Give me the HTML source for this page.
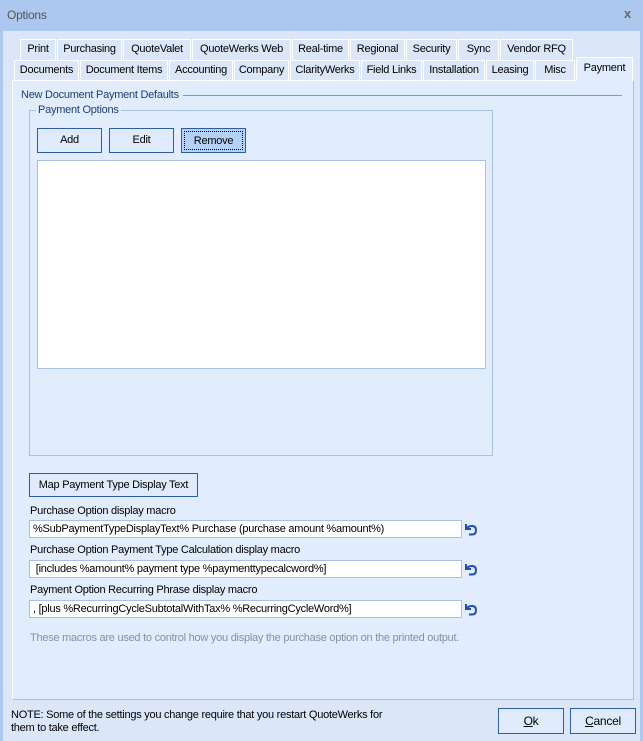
<!DOCTYPE html>
<html><head><style>
*{margin:0;padding:0;box-sizing:border-box}
body{width:643px;height:741px;background:#dbe7f8;font-family:"Liberation Sans",sans-serif;font-size:11px;letter-spacing:-0.25px;color:#000;position:relative;overflow:hidden}
.a{position:absolute;white-space:nowrap}
.tab{position:absolute;height:21px;border:1px solid #fff;border-bottom:none;background:#dbe7f8;text-align:center;line-height:19px;font-size:11px}
.btn{position:absolute;border:1px solid #2d5f9e;background:#dfeafa;text-align:center;line-height:22px}
.inp{position:absolute;background:#fff;border:1px solid #a9c1e0;height:18px;line-height:16px;padding-left:3px}
.ic{position:absolute;width:16px;height:16px}
</style></head><body>
<div class="a" style="left:0;top:0;width:643px;height:31px;background:#adc8ee"></div>
<div class="a" style="left:7px;top:8px;font-size:12px;color:#555">Options</div>
<div class="a" style="left:624px;top:6px;font-size:13px;font-weight:bold;color:#666">x</div>
<div class="a" style="left:0;top:31px;width:3px;height:710px;background:#adc8ee"></div>
<div class="a" style="left:640px;top:31px;width:3px;height:710px;background:#adc8ee"></div>

<div class="tab" style="left:20px;top:39px;width:36px">Print</div>
<div class="tab" style="left:57px;top:39px;width:65px">Purchasing</div>
<div class="tab" style="left:123px;top:39px;width:68px">QuoteValet</div>
<div class="tab" style="left:192px;top:39px;width:99px">QuoteWerks Web</div>
<div class="tab" style="left:292px;top:39px;width:57px">Real-time</div>
<div class="tab" style="left:350px;top:39px;width:55px">Regional</div>
<div class="tab" style="left:406px;top:39px;width:51px">Security</div>
<div class="tab" style="left:458px;top:39px;width:41px">Sync</div>
<div class="tab" style="left:500px;top:39px;width:73px">Vendor RFQ</div>

<div class="tab" style="left:14px;top:60px;width:65px">Documents</div>
<div class="tab" style="left:80px;top:60px;width:88px">Document Items</div>
<div class="tab" style="left:169px;top:60px;width:64px">Accounting</div>
<div class="tab" style="left:234px;top:60px;width:55px">Company</div>
<div class="tab" style="left:290px;top:60px;width:70px">ClarityWerks</div>
<div class="tab" style="left:361px;top:60px;width:61px">Field Links</div>
<div class="tab" style="left:423px;top:60px;width:62px">Installation</div>
<div class="tab" style="left:486px;top:60px;width:48px">Leasing</div>
<div class="tab" style="left:535px;top:60px;width:40px">Misc</div>

<div class="a" style="left:12px;top:80px;width:622px;height:620px;background:#e1ecfc;border:1px solid #fff;border-right-color:#a9c1e0;border-bottom-color:#a9c1e0"></div>
<div class="tab" style="left:576px;top:57px;width:57px;height:24px;background:#e1ecfc;line-height:21px">Payment</div>

<div class="a" style="left:21px;top:89px;color:#1d3f75">New Document Payment Defaults</div>
<div class="a" style="left:183px;top:95px;width:439px;height:1px;background:#7d9cc6"></div>
<div class="a" style="left:29px;top:110px;width:464px;height:346px;border:1px solid #a9c1e0"></div>
<div class="a" style="left:36px;top:104px;padding:0 2px;background:#e1ecfc;color:#1d3f75">Payment Options</div>
<div class="btn" style="left:37px;top:128px;width:65px;height:25px">Add</div>
<div class="btn" style="left:109px;top:128px;width:65px;height:25px">Edit</div>
<div class="btn" style="left:181px;top:128px;width:65px;height:25px;background:#b4d2f8;border-color:#2d5f9e"><div style="position:absolute;left:2px;top:2px;right:2px;bottom:2px;border:1px dotted #000;line-height:19px">Remove</div></div>
<div class="a" style="left:37px;top:160px;width:449px;height:209px;background:#fff;border:1px solid #a9c1e0"></div>

<div class="btn" style="left:29px;top:473px;width:169px;height:24px;line-height:22px">Map Payment Type Display Text</div>
<div class="a" style="left:30px;top:505px">Purchase Option display macro</div>
<div class="inp" style="left:29px;top:520px;width:433px">%SubPaymentTypeDisplayText% Purchase (purchase amount %amount%)</div>
<div class="a" style="left:30px;top:544px">Purchase Option Payment Type Calculation display macro</div>
<div class="inp" style="left:29px;top:560px;width:433px">&nbsp;[includes %amount% payment type %paymenttypecalcword%]</div>
<div class="a" style="left:30px;top:584px">Payment Option Recurring Phrase display macro</div>
<div class="inp" style="left:29px;top:600px;width:433px">, [plus %RecurringCycleSubtotalWithTax% %RecurringCycleWord%]</div>
<svg class="ic" style="left:463px;top:521px" viewBox="0 0 16 16"><path d="M3 3v5h5M3 8q2-3 6-3q4 0 4 4.5q0 4-4 4H6" fill="none" stroke="#1f4fb0" stroke-width="2"/></svg>
<svg class="ic" style="left:463px;top:561px" viewBox="0 0 16 16"><path d="M3 3v5h5M3 8q2-3 6-3q4 0 4 4.5q0 4-4 4H6" fill="none" stroke="#1f4fb0" stroke-width="2"/></svg>
<svg class="ic" style="left:463px;top:601px" viewBox="0 0 16 16"><path d="M3 3v5h5M3 8q2-3 6-3q4 0 4 4.5q0 4-4 4H6" fill="none" stroke="#1f4fb0" stroke-width="2"/></svg>
<div class="a" style="left:30px;top:632px;color:#8a9099">These macros are used to control how you display the purchase option on the printed output.</div>

<div class="a" style="left:11px;top:709px;line-height:13px">NOTE: Some of the settings you change require that you restart QuoteWerks for<br>them to take effect.</div>
<div class="btn" style="left:498px;top:708px;width:66px;height:26px;line-height:24px;font-size:12px"><u>O</u>k</div>
<div class="btn" style="left:570px;top:708px;width:66px;height:26px;line-height:24px;font-size:12px"><u>C</u>ancel</div>
</body></html>
